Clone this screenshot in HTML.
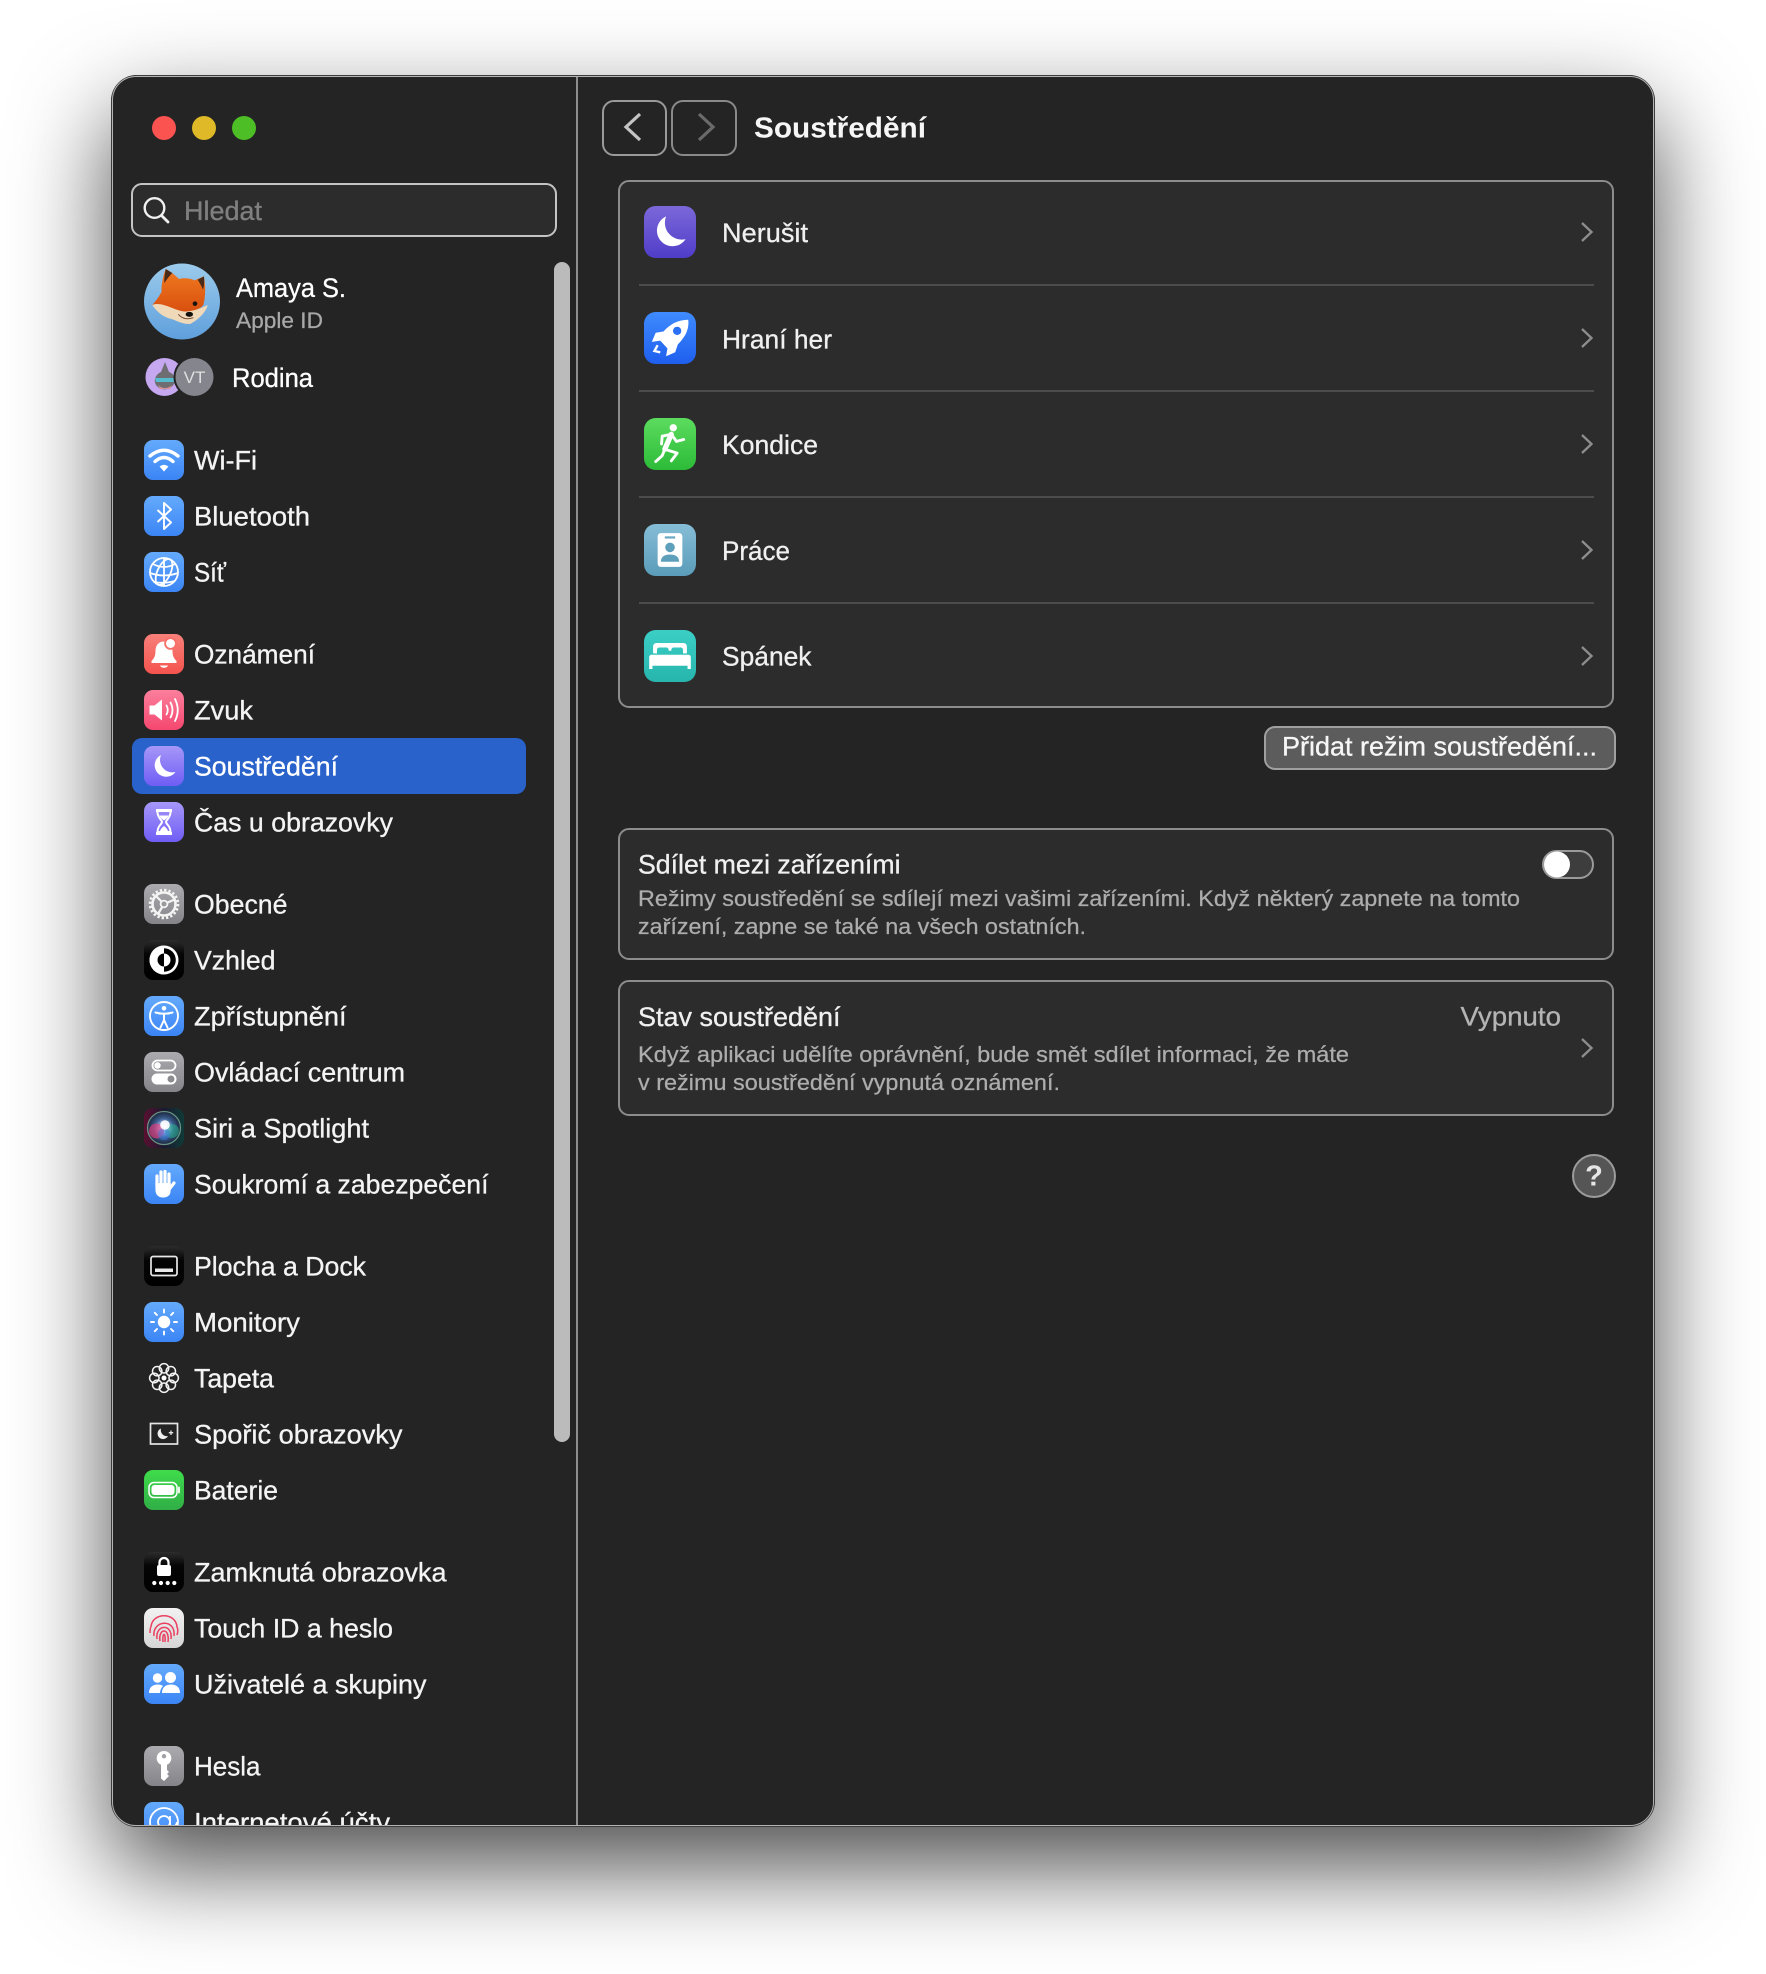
<!DOCTYPE html>
<html lang="cs">
<head>
<meta charset="utf-8">
<title>Soustředění</title>
<style>
html,body{margin:0;padding:0;background:#fff;width:1766px;height:1974px;overflow:hidden}
body{position:relative;font-family:"Liberation Sans",sans-serif}
#win{position:absolute;left:111px;top:75px;width:1544px;height:1752px;background:#242424;border-radius:26px;overflow:hidden;box-shadow:0 40px 95px rgba(0,0,0,.7)}
#in{position:absolute;left:-111px;top:-75px;width:1766px;height:1974px}
#in>div{position:absolute;box-sizing:border-box}
#edge{position:absolute;left:111px;top:75px;width:1544px;height:1752px;box-sizing:border-box;border:1.5px solid #3c3c3c;border-radius:26px}
#edge:after{content:"";position:absolute;inset:0;border:1.5px solid #b4b4b4;border-radius:24px}
.card{background:#2c2c2c;border:2px solid #8c8c8c;border-radius:11px}
svg text{font-family:"Liberation Sans",sans-serif}
.s{font-size:26.5px;fill:var(--c,#f4f4f4);stroke:var(--c,#f4f4f4);stroke-width:.3px}
.m{font-size:26.5px;fill:var(--c,#f0f0f0);stroke:var(--c,#f0f0f0);stroke-width:.3px}
.d{font-size:22px;fill:var(--c,#adadad);stroke:var(--c,#adadad);stroke-width:.25px}
</style>
</head>
<body>
<div id="win"><div id="in">
  <div style="left:576px;top:74px;width:2px;height:1760px;background:#8e8e8e"></div>
  <div style="left:131px;top:183px;width:426px;height:54px;background:#2c2c2c;border:2px solid #c4c4c4;border-radius:11px"></div>
  <div style="left:554px;top:262px;width:16px;height:1180px;background:#bbb;border-radius:8px"></div>
  <div style="left:132px;top:738px;width:394px;height:56px;background:#2a62cc;border-radius:10px"></div>

  <div style="left:602px;top:100px;width:65px;height:56px;border:2px solid #9a9a9a;border-radius:12px"></div>
  <div style="left:671px;top:100px;width:66px;height:56px;border:2px solid #8a8a8a;border-radius:12px"></div>

  <div class="card" style="left:618px;top:180px;width:996px;height:528px"></div>
  <div style="left:639px;top:284px;width:955px;height:2px;background:#4c4c4c"></div>
  <div style="left:639px;top:390px;width:955px;height:2px;background:#4c4c4c"></div>
  <div style="left:639px;top:496px;width:955px;height:2px;background:#4c4c4c"></div>
  <div style="left:639px;top:602px;width:955px;height:2px;background:#4c4c4c"></div>

  <div style="left:1264px;top:726px;width:352px;height:44px;background:#5c5c5c;border:2px solid #a0a0a0;border-radius:11px"></div>

  <div class="card" style="left:618px;top:828px;width:996px;height:132px"></div>
  <div style="left:1542px;top:850px;width:52px;height:29px;background:#3d3d3d;border:2px solid #9a9a9a;border-radius:15px"></div>
  <div class="card" style="left:618px;top:980px;width:996px;height:136px"></div>
  <div style="left:1572px;top:1154px;width:44px;height:44px;background:#555;border:2px solid #9c9c9c;border-radius:50%"></div>

<svg style="position:absolute;left:0;top:0" width="1766" height="1974" viewBox="0 0 1766 1974" xmlns="http://www.w3.org/2000/svg">
<defs>
<linearGradient id="gBlue" x1="0" y1="0" x2="0" y2="1"><stop offset="0" stop-color="#64aafc"/><stop offset="1" stop-color="#3b85f6"/></linearGradient>
<linearGradient id="gRed" x1="0" y1="0" x2="0" y2="1"><stop offset="0" stop-color="#f8807a"/><stop offset="1" stop-color="#f5534e"/></linearGradient>
<linearGradient id="gPink" x1="0" y1="0" x2="0" y2="1"><stop offset="0" stop-color="#fb7f9c"/><stop offset="1" stop-color="#f5476f"/></linearGradient>
<linearGradient id="gPur" x1="0" y1="0" x2="0" y2="1"><stop offset="0" stop-color="#a697f8"/><stop offset="1" stop-color="#6f5df5"/></linearGradient>
<linearGradient id="gGray" x1="0" y1="0" x2="0" y2="1"><stop offset="0" stop-color="#ababaf"/><stop offset="1" stop-color="#858589"/></linearGradient>
<linearGradient id="gBlack" x1="0" y1="0" x2="0" y2="1"><stop offset="0" stop-color="#2c2c2c"/><stop offset=".35" stop-color="#050505"/><stop offset="1" stop-color="#000"/></linearGradient>
<linearGradient id="gGreen" x1="0" y1="0" x2="0" y2="1"><stop offset="0" stop-color="#3fdc4b"/><stop offset="1" stop-color="#30ae46"/></linearGradient>
<linearGradient id="gWhite" x1="0" y1="0" x2="0" y2="1"><stop offset="0" stop-color="#f2f2f2"/><stop offset="1" stop-color="#d6d6d6"/></linearGradient>
<linearGradient id="gNer" x1="0" y1="0" x2="0" y2="1"><stop offset="0" stop-color="#7c68d9"/><stop offset="1" stop-color="#4f3dc9"/></linearGradient>
<linearGradient id="gHra" x1="0" y1="0" x2="0" y2="1"><stop offset="0" stop-color="#3f8bff"/><stop offset="1" stop-color="#1e5fee"/></linearGradient>
<linearGradient id="gKon" x1="0" y1="0" x2="0" y2="1"><stop offset="0" stop-color="#5cdc5e"/><stop offset="1" stop-color="#2cbb38"/></linearGradient>
<linearGradient id="gPra" x1="0" y1="0" x2="0" y2="1"><stop offset="0" stop-color="#86bdd6"/><stop offset="1" stop-color="#5a9cb9"/></linearGradient>
<linearGradient id="gSpa" x1="0" y1="0" x2="0" y2="1"><stop offset="0" stop-color="#3bcfc6"/><stop offset="1" stop-color="#27b5ad"/></linearGradient>
<linearGradient id="gSky" x1="0" y1="0" x2="0" y2="1"><stop offset="0" stop-color="#9ccbec"/><stop offset="1" stop-color="#5e9fdc"/></linearGradient>
<linearGradient id="gFox" x1="0" y1="0" x2="0" y2="1"><stop offset="0" stop-color="#f07a20"/><stop offset="1" stop-color="#d9500f"/></linearGradient>
<linearGradient id="gSiriBg" x1="0" y1="0" x2="1" y2="0"><stop offset="0" stop-color="#5a0f30"/><stop offset=".5" stop-color="#1a1a30"/><stop offset="1" stop-color="#0f3a38"/></linearGradient>
<radialGradient id="gSiri" cx=".5" cy=".5" r=".55"><stop offset="0" stop-color="#fff"/><stop offset=".22" stop-color="#b8c8ff"/><stop offset=".55" stop-color="#3a5f90"/><stop offset="1" stop-color="#151a2c"/></radialGradient>
</defs>

<!-- traffic lights -->
<circle cx="164" cy="128" r="12" fill="#fb5350"/>
<circle cx="204" cy="128" r="12" fill="#dfb927"/>
<circle cx="244" cy="128" r="12" fill="#4ebe26"/>

<!-- search -->
<circle cx="154.5" cy="208" r="9.8" fill="none" stroke="#f0f0f0" stroke-width="2.4"/>
<path d="M161.5 215.5L168 222" stroke="#f0f0f0" stroke-width="2.8" stroke-linecap="round"/>
<text x="184" y="220" class="s" style="--c:#808080" textLength="78" lengthAdjust="spacingAndGlyphs">Hledat</text>

<!-- avatar fox -->
<circle cx="182" cy="301.5" r="38" fill="url(#gSky)"/>
<g transform="translate(135,255) scale(.3333)">
<path d="M92 42C108 50 122 62 132 72C150 68 165 70 178 76L207 64C211 90 213 120 205 150C190 170 150 175 120 165C95 160 70 155 52 150C65 135 72 125 80 110C78 90 85 60 92 42Z" fill="url(#gFox)"/>
<path d="M92 42C90 55 87 70 88 84C96 72 104 62 112 54Z" fill="#4a2a18"/>
<path d="M207 64L188 74C194 84 200 94 204 104C208 92 208 78 207 64Z" fill="#4a2a18"/>
<path d="M52 150C80 138 120 168 150 170C180 168 200 158 218 150C214 170 190 195 165 207C140 207 125 197 110 192C85 187 65 170 52 150Z" fill="#efd9b8"/>
<circle cx="180" cy="146" r="7" fill="#1a1210"/>
<ellipse cx="163" cy="178" rx="11" ry="7.5" fill="#14100e"/>
<path d="M130 178C140 190 155 195 175 188" stroke="#7a4a30" stroke-width="3" fill="none"/>
</g>
<text x="236" y="297" class="s" style="--c:#fff" textLength="110" lengthAdjust="spacingAndGlyphs">Amaya S.</text>
<text x="236" y="328" class="d" style="--c:#a8a8a8" textLength="87" lengthAdjust="spacingAndGlyphs">Apple ID</text>

<!-- family -->
<circle cx="164.5" cy="377" r="19" fill="#c5a8f0"/>
<path d="M165 362L169 372C175 374 176 380 174 384C170 391 160 391 156 385C153 380 156 374 161 372Z" fill="#6e6e72"/>
<path d="M155 378L175 378L174 382L156 382Z" fill="#55bcd0"/>
<path d="M158 385C162 389 168 389 172 385L170 389L160 389Z" fill="#d89090"/>
<circle cx="194.5" cy="377" r="21" fill="#242424"/>
<circle cx="194.5" cy="377" r="19" fill="#85858d"/>
<text x="194.5" y="383" font-size="17" fill="#e0e0e0" text-anchor="middle">VT</text>
<text x="232" y="386.8" class="s" style="--c:#fff" textLength="81" lengthAdjust="spacingAndGlyphs">Rodina</text>

<!-- sidebar icons -->
<g transform="translate(144,440)"><rect width="40" height="40" rx="9" fill="url(#gBlue)"/>
<path d="M6 16Q20 4.500 34 16" fill="none" stroke="#fff" stroke-width="3.400" stroke-linecap="round"/><path d="M11 21.500Q20 13.500 29 21.500" fill="none" stroke="#fff" stroke-width="3.400" stroke-linecap="round"/><path d="M15.500 26.500Q20 23 24.500 26.500L20 31.500Z" fill="#fff"/></g>
<g transform="translate(144,496)"><rect width="40" height="40" rx="9" fill="url(#gBlue)"/>
<path d="M13.500 14L27 26.500L20 33V7L27 13.500L13.500 26" fill="none" stroke="#fff" stroke-width="1.900" stroke-linejoin="round"/></g>
<g transform="translate(144,552)"><rect width="40" height="40" rx="9" fill="url(#gBlue)"/>
<g fill="none" stroke="#fff" stroke-width="1.800"><circle cx="20" cy="20" r="14"/><ellipse cx="20" cy="20" rx="6.500" ry="14" transform="rotate(25 20 20)"/><path d="M9 12Q20 18 31 12M6 21Q20 26 34 21M10 30Q20 32 31 29M20 6V34"/></g></g>

<g transform="translate(144,634)"><rect width="40" height="40" rx="9" fill="url(#gRed)"/>
<path d="M20 7.500C14 7.500 11.500 12 11.500 17C11.500 22 10 24.500 7.500 27V29H32.500V27C30 24.500 28.500 22 28.500 17C28.500 12 26 7.500 20 7.500Z" fill="#fff"/><path d="M16 31.500H24C23 34.500 17 34.500 16 31.500Z" fill="#fff"/><circle cx="26.500" cy="9.500" r="6.300" fill="#f77069"/><circle cx="26.500" cy="9.500" r="4.500" fill="#fff"/></g>
<g transform="translate(144,690)"><rect width="40" height="40" rx="9" fill="url(#gPink)"/>
<path d="M5.500 15.500H10.500L18 9.500V30.500L10.500 24.500H5.500Z" fill="#fff"/><g fill="none" stroke="#fff" stroke-width="1.800" stroke-linecap="round"><path d="M22.500 15.500Q25 20 22.500 24.500"/><path d="M26.500 12.500Q30.500 20 26.500 27.500"/><path d="M31 9Q36.500 20 31 31"/></g></g>
<g transform="translate(144,746)"><rect width="40" height="40" rx="9" fill="url(#gPur)"/>
<path d="M17 9A11.500 11.500 0 1 0 31.500 26A12.500 12.500 0 0 1 17 9Z" fill="#fff"/></g>
<g transform="translate(144,802)"><rect width="40" height="40" rx="9" fill="url(#gPur)"/>
<path d="M12 7H28V10H12ZM12 30H28V33H12Z" fill="#fff"/><path d="M13.500 10C13.500 16 18 18 18 20C18 22 13.500 24 13.500 30H26.500C26.500 24 22 22 22 20C22 18 26.500 16 26.500 10" fill="none" stroke="#fff" stroke-width="2"/><path d="M15.500 13.500H24.500C23.500 16.500 21 17.500 20 18.500C19 17.500 16.500 16.500 15.500 13.500ZM16 29C17 26 19 25 20 24C21 25 23 26 24 29Z" fill="#fff"/></g>

<g transform="translate(144,884)"><rect width="40" height="40" rx="9" fill="url(#gGray)"/>
<g fill="none" stroke="#f4f4f4"><circle cx="20" cy="20" r="11.500" stroke-width="2.600"/><circle cx="20" cy="20" r="14" stroke-width="2.600" stroke-dasharray="2.300 2.100"/><path d="M20 20L11.500 11.500M20 20L29.500 16M20 20L14.300 29.500" stroke-width="2.200"/></g><circle cx="20" cy="20" r="3.400" fill="#9a9a9e" stroke="#f4f4f4" stroke-width="1.800"/></g>
<g transform="translate(144,940)"><rect width="40" height="40" rx="9" fill="url(#gBlack)"/>
<circle cx="20" cy="20" r="14.500" fill="#fff"/><circle cx="20" cy="20" r="11.800" fill="#000"/><path d="M20 5.500A14.500 14.500 0 0 0 20 34.500Z" fill="#fff"/><circle cx="20" cy="20" r="6.500" fill="#fff"/><path d="M20 13.500A6.500 6.500 0 0 0 20 26.500Z" fill="#000"/></g>
<g transform="translate(144,996)"><rect width="40" height="40" rx="9" fill="url(#gBlue)"/>
<circle cx="20" cy="20" r="14" fill="none" stroke="#fff" stroke-width="1.900"/><circle cx="20" cy="12.300" r="2.300" fill="#fff"/><path d="M11.500 16.500Q20 19 28.500 16.500M20 17.500V24M20 24L16.500 31.500M20 24L23.500 31.500" fill="none" stroke="#fff" stroke-width="2" stroke-linecap="round"/></g>
<g transform="translate(144,1052)"><rect width="40" height="40" rx="9" fill="url(#gGray)"/>
<rect x="8.500" y="8.500" width="23" height="10" rx="5" fill="none" stroke="#fff" stroke-width="1.800"/><circle cx="13.500" cy="13.500" r="3.200" fill="#fff"/><rect x="7.500" y="21.500" width="25" height="11" rx="5.500" fill="#fff"/><circle cx="27" cy="27" r="3.500" fill="#8c8c90"/></g>
<g transform="translate(144,1108)"><rect width="40" height="40" rx="9" fill="url(#gSiriBg)"/>
<circle cx="20" cy="20" r="16" fill="url(#gSiri)"/><circle cx="12.500" cy="23" r="7.500" fill="#e83a78" opacity=".65"/><circle cx="28" cy="23" r="7" fill="#26b088" opacity=".55"/><circle cx="20" cy="26" r="6" fill="#3a7ae0" opacity=".5"/><circle cx="21" cy="17" r="4.800" fill="#fff" opacity=".9"/><circle cx="20" cy="20" r="16.500" fill="none" stroke="#7ab09a" stroke-width="1.300" opacity=".8"/></g>
<g transform="translate(144,1164)"><rect width="40" height="40" rx="9" fill="url(#gBlue)"/>
<g stroke="#fff" stroke-width="3.200" stroke-linecap="round"><path d="M13 21V12"/><path d="M17 18V8"/><path d="M21 18V7.500"/><path d="M25 20V10"/><path d="M25 25.500L30 19"/></g><path d="M11.400 19H26.600V27C26.600 31 23.500 33.500 19.500 33.500C15.500 33.500 11.400 32 11.400 25Z" fill="#fff"/></g>

<g transform="translate(144,1246)"><rect width="40" height="40" rx="9" fill="url(#gBlack)"/>
<rect x="7" y="10.500" width="26" height="19" rx="2" fill="none" stroke="#e8e8e8" stroke-width="1.700"/><rect x="11" y="22.500" width="18" height="3.500" fill="#e8e8e8"/></g>
<g transform="translate(144,1302)"><rect width="40" height="40" rx="9" fill="url(#gBlue)"/>
<circle cx="20" cy="20" r="6.200" fill="#fff"/><path d="M20 7.500V10.500M20 29.500V32.500M7 20H10M30 20H33M10.800 10.800L13 13M27 27L29.200 29.200M10.800 29.200L13 27M27 13L29.200 10.800" stroke="#fff" stroke-width="1.900" stroke-linecap="round"/></g>
<g transform="translate(144,1358)"><g fill="none" stroke="#f4f4f4" stroke-width="1.500"><circle cx="20" cy="10.300" r="4.700"/><circle cx="20" cy="29.700" r="4.700"/><circle cx="10.300" cy="20" r="4.700"/><circle cx="29.700" cy="20" r="4.700"/><circle cx="13.200" cy="13.200" r="4.700"/><circle cx="26.800" cy="13.200" r="4.700"/><circle cx="13.200" cy="26.800" r="4.700"/><circle cx="26.800" cy="26.800" r="4.700"/></g><circle cx="20" cy="20" r="2.500" fill="#fff"/></g>
<g transform="translate(144,1414)"><rect x="6.500" y="9.500" width="27" height="20.500" fill="none" stroke="#e6e6e6" stroke-width="1.700"/><path d="M17 14.500A5.500 5.500 0 1 0 24 22A6 6 0 0 1 17 14.500Z" fill="#f0f0f0"/><path d="M27 16.500V21M24.800 18.700H29.200" stroke="#e6e6e6" stroke-width="1.300"/></g>
<g transform="translate(144,1470)"><rect width="40" height="40" rx="9" fill="url(#gGreen)"/>
<rect x="5" y="12.500" width="28" height="15" rx="5" fill="none" stroke="#fff" stroke-width="1.500"/><rect x="7.500" y="15" width="23" height="10" rx="3" fill="#fff"/><path d="M35 17.500V22.500" stroke="#fff" stroke-width="1.800" stroke-linecap="round"/></g>

<g transform="translate(144,1552)"><rect width="40" height="40" rx="9" fill="url(#gBlack)"/>
<rect x="13" y="13" width="14" height="11" rx="2" fill="#fff"/><path d="M15.500 14V10.500A4.500 4.500 0 0 1 24.500 10.500V14" fill="none" stroke="#fff" stroke-width="2.200"/><g fill="#fff"><circle cx="10.300" cy="31" r="2.100"/><circle cx="17" cy="31" r="2.100"/><circle cx="23.700" cy="31" r="2.100"/><circle cx="30.300" cy="31" r="2.100"/></g></g>
<g transform="translate(144,1608)"><rect width="40" height="40" rx="9" fill="url(#gWhite)"/>
<g fill="none" stroke="#ea3f60" stroke-width="1.500"><path d="M7 19C8 4 32 4 33 19"/><path d="M6 25C6 22 6 20 7 19M33 19C34 21 34 24 33 27"/><path d="M10 28C8 12 32 10 30 28"/><path d="M13 31C11 16 29 15 27 31"/><path d="M16 33C14 20 26 19 24 34"/><path d="M19 34C18 24 22 24 21 34"/></g></g>
<g transform="translate(144,1664)"><rect width="40" height="40" rx="9" fill="url(#gBlue)"/>
<g fill="#fff"><circle cx="13.500" cy="14" r="4.700"/><circle cx="26.500" cy="13.500" r="5.500"/><path d="M5 29C5 23 9 20.500 14 20.500C16 20.500 17.500 21 19 22C17 24 16 26.500 16 29Z"/><path d="M18 29C18 23 22 20.500 27 20.500C32 20.500 36 23 36 29Z"/></g></g>

<g transform="translate(144,1746)"><rect width="40" height="40" rx="9" fill="url(#gGray)"/>
<path fill-rule="evenodd" d="M20 5A7.200 7.200 0 0 1 23 18.800V24L25 26L23 28L25 30L23 32L20 35L17 32.500V18.800A7.200 7.200 0 0 1 20 5ZM20 8A2.200 2.200 0 1 0 20 12.400A2.200 2.200 0 1 0 20 8Z" fill="#fff"/></g>
<g transform="translate(144,1802)"><rect width="40" height="40" rx="9" fill="url(#gBlue)"/>
<circle cx="20" cy="20" r="14" fill="none" stroke="#fff" stroke-width="1.800"/><circle cx="20" cy="20" r="6" fill="none" stroke="#fff" stroke-width="1.800"/><path d="M26 14V22C26 26 32 26 33 20" fill="none" stroke="#fff" stroke-width="1.800"/></g>

<!-- sidebar text -->
<text x="194" y="469.6" class="s" textLength="63" lengthAdjust="spacingAndGlyphs">Wi-Fi</text>
<text x="194" y="525.6" class="s" textLength="116" lengthAdjust="spacingAndGlyphs">Bluetooth</text>
<text x="194" y="581.6" class="s" textLength="32" lengthAdjust="spacingAndGlyphs">Síť</text>
<text x="194" y="663.6" class="s" textLength="121" lengthAdjust="spacingAndGlyphs">Oznámení</text>
<text x="194" y="719.6" class="s" textLength="59" lengthAdjust="spacingAndGlyphs">Zvuk</text>
<text x="194" y="775.6" class="s" style="--c:#fff" textLength="144" lengthAdjust="spacingAndGlyphs">Soustředění</text>
<text x="194" y="831.6" class="s" textLength="199" lengthAdjust="spacingAndGlyphs">Čas u obrazovky</text>
<text x="194" y="913.6" class="s" textLength="93.500" lengthAdjust="spacingAndGlyphs">Obecné</text>
<text x="194" y="969.6" class="s" textLength="81.500" lengthAdjust="spacingAndGlyphs">Vzhled</text>
<text x="194" y="1025.6" class="s" textLength="152.500" lengthAdjust="spacingAndGlyphs">Zpřístupnění</text>
<text x="194" y="1081.6" class="s" textLength="211" lengthAdjust="spacingAndGlyphs">Ovládací centrum</text>
<text x="194" y="1137.6" class="s" textLength="175" lengthAdjust="spacingAndGlyphs">Siri a Spotlight</text>
<text x="194" y="1193.6" class="s" textLength="294.500" lengthAdjust="spacingAndGlyphs">Soukromí a zabezpečení</text>
<text x="194" y="1275.6" class="s" textLength="172" lengthAdjust="spacingAndGlyphs">Plocha a Dock</text>
<text x="194" y="1331.6" class="s" textLength="106" lengthAdjust="spacingAndGlyphs">Monitory</text>
<text x="194" y="1387.6" class="s" textLength="80" lengthAdjust="spacingAndGlyphs">Tapeta</text>
<text x="194" y="1443.6" class="s" textLength="208.500" lengthAdjust="spacingAndGlyphs">Spořič obrazovky</text>
<text x="194" y="1499.6" class="s" textLength="84" lengthAdjust="spacingAndGlyphs">Baterie</text>
<text x="194" y="1581.6" class="s" textLength="252.500" lengthAdjust="spacingAndGlyphs">Zamknutá obrazovka</text>
<text x="194" y="1637.6" class="s" textLength="199" lengthAdjust="spacingAndGlyphs">Touch ID a heslo</text>
<text x="194" y="1693.6" class="s" textLength="232.500" lengthAdjust="spacingAndGlyphs">Uživatelé a skupiny</text>
<text x="194" y="1775.6" class="s" textLength="66.500" lengthAdjust="spacingAndGlyphs">Hesla</text>
<text x="194" y="1831.6" class="s" textLength="196" lengthAdjust="spacingAndGlyphs">Internetové účty</text>

<!-- toolbar -->
<path d="M640 114L626 127L640 140" fill="none" stroke="#c4c4c4" stroke-width="3.200"/>
<path d="M699 114L713 127L699 140" fill="none" stroke="#6a6a6a" stroke-width="3.200"/>
<text x="754" y="137.500" font-size="29" font-weight="700" fill="#f6f6f6" textLength="172" lengthAdjust="spacingAndGlyphs">Soustředění</text>

<!-- focus icons -->
<g transform="translate(644,206) scale(1.3)"><rect width="40" height="40" rx="9" fill="url(#gNer)"/><path d="M17 8A12 12 0 1 0 32 25.500A13 13 0 0 1 17 8Z" fill="#fff"/></g>
<g transform="translate(644,312) scale(1.3)"><rect width="40" height="40" rx="9" fill="url(#gHra)"/>
<path d="M34 6C26 6 20 9.500 15 15L9 16L6 23L12.500 22L18 28L17 34L24 31L26 25C31 20 35 14 34 6Z" fill="#fff"/><circle cx="25.500" cy="14.500" r="3.200" fill="#2a70f4"/><path d="M10.500 25.500L8 30L12.500 31" fill="none" stroke="#fff" stroke-width="1.800"/></g>
<g transform="translate(644,418) scale(1.3)"><rect width="40" height="40" rx="9" fill="url(#gKon)"/>
<circle cx="22.500" cy="7.500" r="2.800" fill="#fff"/><path d="M21 12.500L16 24" stroke="#fff" stroke-width="4" stroke-linecap="round"/><path d="M13.500 20L14 14L21 12.500L25 18L30.500 16.500M16 24L25.500 27L21 33M16 24L14 29L9 33.500" fill="none" stroke="#fff" stroke-width="2.200" stroke-linecap="round" stroke-linejoin="round"/></g>
<g transform="translate(644,524) scale(1.3)"><rect width="40" height="40" rx="9" fill="url(#gPra)"/>
<rect x="10.500" y="7" width="19" height="26" rx="2.500" fill="#fff"/><rect x="16" y="9.500" width="8" height="1.700" fill="#6aa8c4"/><circle cx="20" cy="18" r="3.700" fill="#5e9fbc"/><path d="M13 29C13 25 16 23.500 20 23.500C24 23.500 27 25 27 29Z" fill="#5e9fbc"/></g>
<g transform="translate(644,630) scale(1.3)"><rect width="40" height="40" rx="9" fill="url(#gSpa)"/>
<path d="M7 18V13C7 11 8 10 10 10H30C32 10 33 11 33 13V18H30V15.500C30 14 29 13.500 28 13.500H23C21.500 13.500 21 14.500 21 16H19C19 14.500 18.500 13.500 17 13.500H12C11 13.500 10 14 10 15.500V18Z" fill="#fff"/><path d="M6 19H34C35.500 19 36 20 36 21V30H33.500V27.500H6.500V30H4V21C4 20 4.500 19 6 19Z" fill="#fff"/></g>

<!-- focus text -->
<text x="722" y="242" class="m" textLength="86" lengthAdjust="spacingAndGlyphs">Nerušit</text>
<text x="722" y="348.300" class="m" textLength="110" lengthAdjust="spacingAndGlyphs">Hraní her</text>
<text x="722" y="454" class="m" textLength="96" lengthAdjust="spacingAndGlyphs">Kondice</text>
<text x="722" y="560" class="m" textLength="68" lengthAdjust="spacingAndGlyphs">Práce</text>
<text x="722" y="665.700" class="m" textLength="89.500" lengthAdjust="spacingAndGlyphs">Spánek</text>

<g fill="none" stroke="#8e8e8e" stroke-width="2.300">
<path d="M1582 223L1591.500 232L1582 241"/>
<path d="M1582 329L1591.500 338L1582 347"/>
<path d="M1582 435L1591.500 444L1582 453"/>
<path d="M1582 541L1591.500 550L1582 559"/>
<path d="M1582 647L1591.500 656L1582 665"/>
<path d="M1582 1039L1591.500 1048L1582 1057"/>
</g>

<text x="1282" y="755.700" class="m" style="--c:#f6f6f6" textLength="315" lengthAdjust="spacingAndGlyphs">Přidat režim soustředění...</text>

<!-- card 2 -->
<text x="638" y="873.300" class="m" textLength="262.500" lengthAdjust="spacingAndGlyphs">Sdílet mezi zařízeními</text>
<text x="638" y="906" class="d" textLength="882" lengthAdjust="spacingAndGlyphs">Režimy soustředění se sdílejí mezi vašimi zařízeními. Když některý zapnete na tomto</text>
<text x="638" y="934" class="d" textLength="448" lengthAdjust="spacingAndGlyphs">zařízení, zapne se také na všech ostatních.</text>
<circle cx="1557" cy="864.500" r="13" fill="#fff"/>

<!-- card 3 -->
<text x="638" y="1026" class="m" textLength="202.500" lengthAdjust="spacingAndGlyphs">Stav soustředění</text>
<text x="1460.500" y="1025.700" class="m" style="--c:#b4b4b4" textLength="100.500" lengthAdjust="spacingAndGlyphs">Vypnuto</text>
<text x="638" y="1062" class="d" textLength="711" lengthAdjust="spacingAndGlyphs">Když aplikaci udělíte oprávnění, bude smět sdílet informaci, že máte</text>
<text x="638" y="1090" class="d" textLength="422" lengthAdjust="spacingAndGlyphs">v režimu soustředění vypnutá oznámení.</text>

<!-- help -->
<text x="1594" y="1185.500" font-size="29" font-weight="700" fill="#e6e6e6" text-anchor="middle">?</text>
</svg>
</div></div>
<div id="edge"></div>
</body>
</html>
